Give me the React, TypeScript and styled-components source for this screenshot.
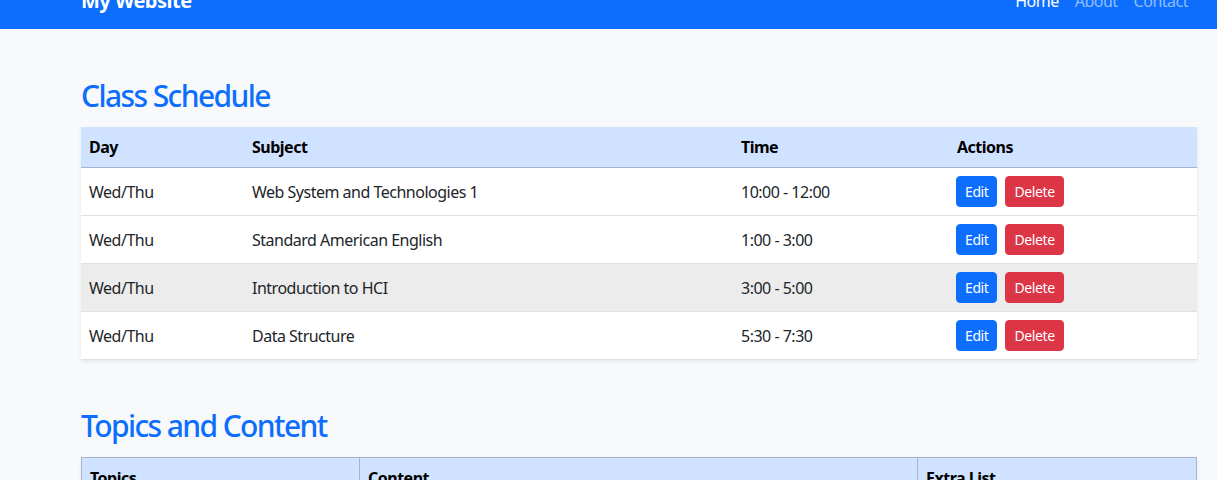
import React from 'react';
import styled, { createGlobalStyle } from 'styled-components';

const GlobalStyle = createGlobalStyle`
    html, body {
        margin: 0;
        padding: 0;
        background: #f8f9fa;
        font-family: 'Noto Sans', 'Open Sans', sans-serif;
        font-size: 16px;
        letter-spacing: -0.5px;
        color: #212529;
    }
`;

const Navbar = styled.nav`
    height: 56px;
    margin-top: -27px;
    background: #0d6efd;
    display: flex;
    align-items: center;
    justify-content: space-between;
    padding: 0 20px 0 81px;
`;

const Brand = styled.a`
    color: #fff;
    font-size: 20px;
    font-weight: 700;
    text-decoration: none;
    line-height: 30px;
`;

const NavList = styled.div`
    display: flex;
    padding-right: 1px;
`;

const NavLink = styled.a<{ $active?: boolean }>`
    color: ${(p) => (p.$active ? '#fff' : 'rgba(255, 255, 255, 0.55)')};
    text-decoration: none;
    padding: 8px;
    line-height: 24px;
`;

const Main = styled.main`
    padding: 47px 20px 0 81px;
`;

const Section = styled.section`
    margin-bottom: 46px;
`;

const Heading = styled.h2`
    color: #0d6efd;
    font-size: 30px;
    font-weight: 500;
    letter-spacing: -1.6px;
    line-height: 38px;
    margin: 0 0 13px;
    padding-top: 1px;
    height: 37px;
`;

const Table = styled.table<{ $bordered?: boolean }>`
    width: 100%;
    border-collapse: collapse;
    table-layout: fixed;
    background: #fff;
    box-shadow: 0 2px 4px rgba(0, 0, 0, 0.075);
    border: ${(p) => (p.$bordered ? '1px solid #a6b5cc' : 'none')};
`;

const HeadCell = styled.th<{ $bordered?: boolean }>`
    background: #cfe2ff;
    text-align: left;
    font-weight: 700;
    padding: 8px;
    line-height: 24px;
    color: #000;
    border-bottom: 1px solid #a6b5cc;
    border-right: ${(p) => (p.$bordered ? '1px solid #a6b5cc' : 'none')};
`;

const Row = styled.tr<{ $hover?: boolean }>`
    background: ${(p) => (p.$hover ? '#ececec' : '#fff')};
`;

const Cell = styled.td<{ $bordered?: boolean }>`
    padding: 8px;
    line-height: 24px;
    color: #212529;
    border-bottom: 1px solid #dee2e6;
    border-right: ${(p) => (p.$bordered ? '1px solid #a6b5cc' : 'none')};
    vertical-align: middle;
`;

const Actions = styled.div`
    display: flex;
    gap: 8px;
    margin-left: -1px;
`;

const Button = styled.button<{ $variant: 'primary' | 'danger' }>`
    font-family: inherit;
    font-size: 14px;
    letter-spacing: -0.4px;
    line-height: 21px;
    padding: 4px 8px;
    border-radius: 4px;
    color: #fff;
    border: 1px solid ${(p) => (p.$variant === 'primary' ? '#0d6efd' : '#dc3545')};
    background: ${(p) => (p.$variant === 'primary' ? '#0d6efd' : '#dc3545')};
    cursor: pointer;
`;

const schedule = [
    { day: 'Wed/Thu', subject: 'Web System and Technologies 1', time: '10:00 - 12:00' },
    { day: 'Wed/Thu', subject: 'Standard American English', time: '1:00 - 3:00' },
    { day: 'Wed/Thu', subject: 'Introduction to HCI', time: '3:00 - 5:00' },
    { day: 'Wed/Thu', subject: 'Data Structure', time: '5:30 - 7:30' },
];

const topics = [
    { topic: 'HTML & CSS', content: 'Page structure, selectors and layout', extra: 'Flexbox, Grid' },
    { topic: 'JavaScript', content: 'Variables, functions and DOM', extra: 'Events, Fetch' },
];

const App = () => {
    return (
        <>
            <GlobalStyle />
            <Navbar>
                <Brand href="#">My Website</Brand>
                <NavList>
                    <NavLink href="#" $active>Home</NavLink>
                    <NavLink href="#">About</NavLink>
                    <NavLink href="#">Contact</NavLink>
                </NavList>
            </Navbar>
            <Main>
                <Section>
                    <Heading>Class Schedule</Heading>
                    <Table>
                        <colgroup>
                            <col style={{ width: 163 }} />
                            <col style={{ width: 489 }} />
                            <col style={{ width: 216 }} />
                            <col />
                        </colgroup>
                        <thead>
                            <tr>
                                <HeadCell>Day</HeadCell>
                                <HeadCell>Subject</HeadCell>
                                <HeadCell>Time</HeadCell>
                                <HeadCell>Actions</HeadCell>
                            </tr>
                        </thead>
                        <tbody>
                            {schedule.map((item, i) => (
                                <Row key={i} $hover={i === 2}>
                                    <Cell>{item.day}</Cell>
                                    <Cell>{item.subject}</Cell>
                                    <Cell>{item.time}</Cell>
                                    <Cell>
                                        <Actions>
                                            <Button $variant="primary">Edit</Button>
                                            <Button $variant="danger">Delete</Button>
                                        </Actions>
                                    </Cell>
                                </Row>
                            ))}
                        </tbody>
                    </Table>
                </Section>
                <Section>
                    <Heading>Topics and Content</Heading>
                    <Table $bordered>
                        <colgroup>
                            <col style={{ width: 278 }} />
                            <col style={{ width: 558 }} />
                            <col />
                        </colgroup>
                        <thead>
                            <tr>
                                <HeadCell $bordered>Topics</HeadCell>
                                <HeadCell $bordered>Content</HeadCell>
                                <HeadCell $bordered>Extra List</HeadCell>
                            </tr>
                        </thead>
                        <tbody>
                            {topics.map((t, i) => (
                                <tr key={i}>
                                    <Cell $bordered>{t.topic}</Cell>
                                    <Cell $bordered>{t.content}</Cell>
                                    <Cell $bordered>{t.extra}</Cell>
                                </tr>
                            ))}
                        </tbody>
                    </Table>
                </Section>
            </Main>
        </>
    );
};

export default App;
